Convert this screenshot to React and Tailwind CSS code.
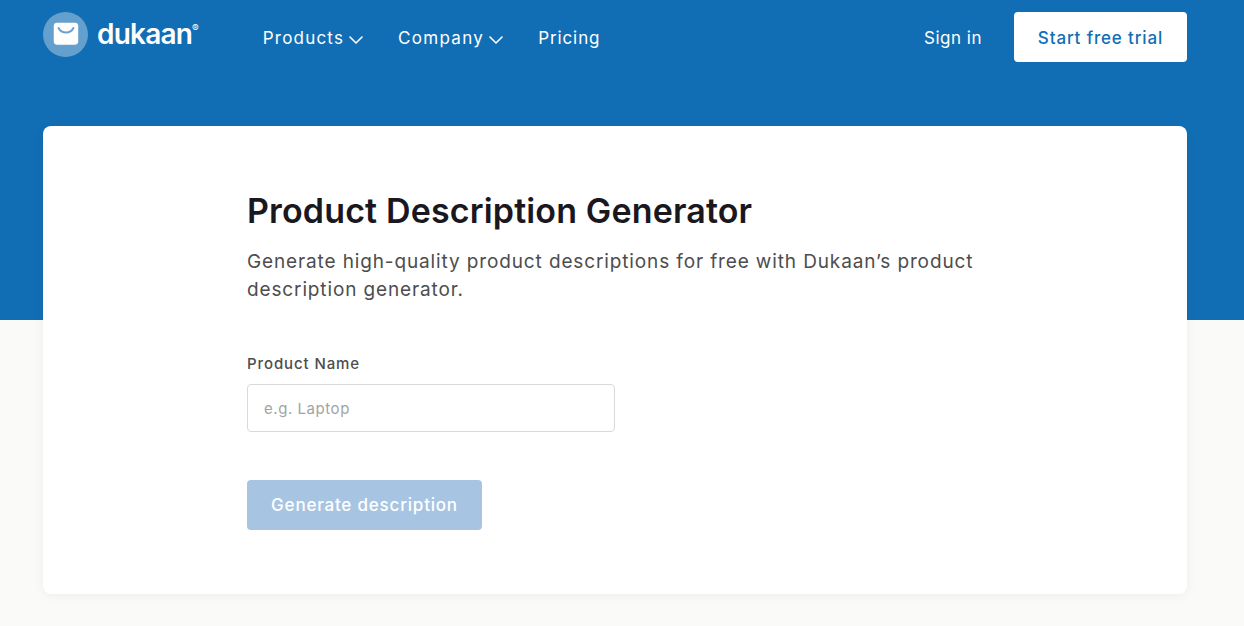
import { ChevronDown } from "lucide-react";

const Logo = () => (
  <div className="mb-[6px] flex items-center">
    <svg width="45" height="45" viewBox="0 0 46 46">
      <circle cx="23" cy="23" r="23" fill="#fff" fillOpacity="0.35" />
      <rect x="11" y="11" width="25" height="22.500" rx="3.500" fill="#fff" />
      <path d="M16 16.500c1.500 3 4 4.500 7.500 4.500s6-1.500 7.500-4.500" fill="none" stroke="#6c9fd0" strokeWidth="2.200" strokeLinecap="round" />
    </svg>
    <span className="ml-[9px] text-[28px] leading-none font-semibold text-white tracking-[-0.8px]">dukaan</span>
    <span className="mb-3 self-center text-[10px] leading-none text-white">®</span>
  </div>
);

const NavLink = ({ label, caret, className }) => (
  <a className={`flex items-center text-[17px] text-white ${className}`}>
    {label}
    {caret && <ChevronDown className="mt-[2px]" size={24} strokeWidth={1.6} />}
  </a>
);

export default function App() {
  return (
    <div className="min-h-screen overflow-hidden bg-[linear-gradient(#126eb4_320px,#fafaf8_320px)] pb-8 pl-[43px] pr-[57px] pt-3 font-['Inter',sans-serif]">
      <header className="flex h-[50px] items-center">
        <Logo />
        <nav className="ml-[64px] flex items-center gap-[30px] pt-1">
          <NavLink label="Products" caret className="tracking-[1.2px]" />
          <NavLink label="Company" caret className="tracking-[1.3px]" />
          <NavLink label="Pricing" className="tracking-[0.9px]" />
        </nav>
        <a className="ml-auto mr-[32px] pt-1 text-[17px] text-white tracking-[0.5px]">Sign in</a>
        <button className="h-[50px] w-[173px] rounded-[4px] bg-white pt-1 text-[17px] font-medium text-[#126eb4] tracking-[0.85px]">
          Start free trial
        </button>
      </header>

      <main className="mt-[64px] h-[468px] rounded-[8px] bg-white pl-[204px] pt-[61px] shadow-[0_2px_12px_rgba(0,0,0,0.05)]">
        <h1 className="text-[34px] leading-[48px] font-semibold text-[#1a181e] tracking-[0.15px]">
          Product Description Generator
        </h1>
        <p className="mt-[13px] w-[760px] text-[19px] leading-[28px] text-[#4d4d4d] tracking-[0.87px]">
          Generate high-quality product descriptions for free with Dukaan’s product description generator.
        </p>
        <label className="mt-[50px] block text-[15px] leading-[20px] font-medium text-[#4d4d4d] tracking-[0.9px]">Product Name</label>
        <input
          className="mt-[10px] block h-[48px] w-[368px] rounded-[4px] border border-[#d9d9d9] px-4 text-[15px] tracking-[0.55px] outline-none placeholder:text-[#a3a3a3]"
          placeholder="e.g. Laptop"
        />
        <button className="mt-[48px] h-[50px] w-[235px] rounded-[4px] bg-[#a7c5e2] pt-[2px] text-[17px] font-medium text-white tracking-[0.8px]">
          Generate description
        </button>
      </main>
    </div>
  );
}
